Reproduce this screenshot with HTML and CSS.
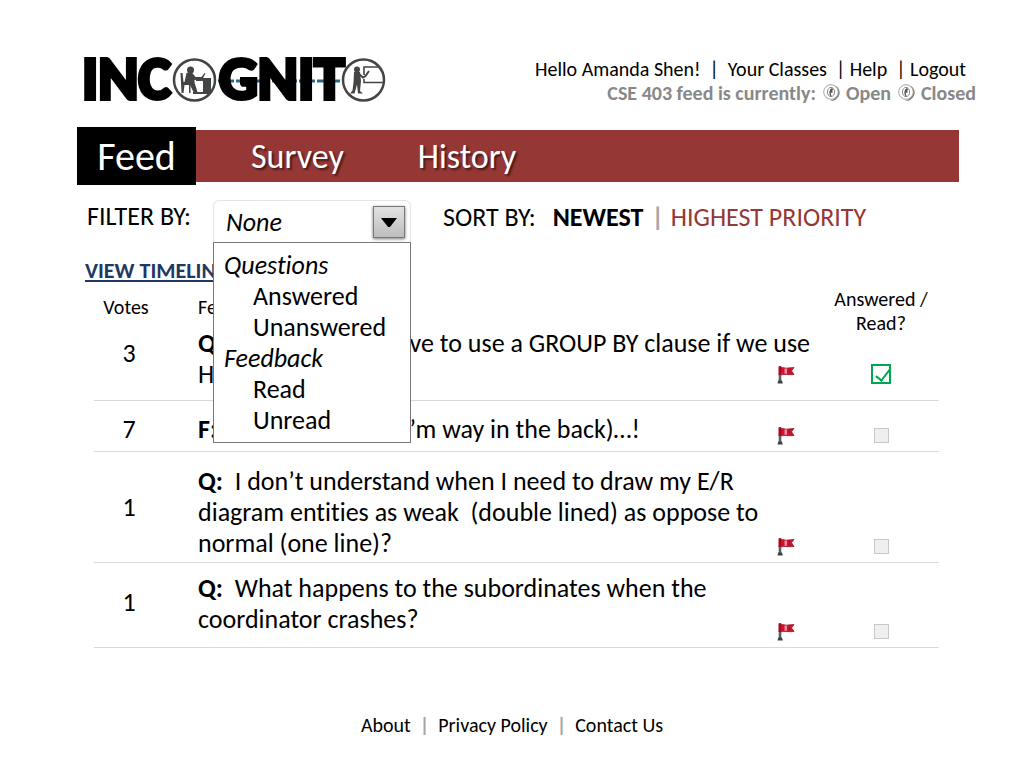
FILE: index.html
```html
<!DOCTYPE html>
<html lang="en">
<head>
<meta charset="utf-8">
<title>Incognito – Feed</title>
<link rel="stylesheet" href="styles.css">
</head>
<body>
<svg class="sprite" aria-hidden="true">
  <symbol id="flag" viewBox="0 0 18 19">
    <path d="M3 3c3-1.200 5 .8 8 0l6-.5-2.500 3.300 2.500 3.700c-5 .8-9-.8-14 .5z" fill="#d80f2c" stroke="#8c2028" stroke-width=".8"/>
    <path d="M7.500 3.500h2.500v5.300H7.500z" fill="#f48a9a"/>
    <path d="M11.500 3.300h2v5.500h-2z" fill="#a81c2c"/>
    <path d="M3 9V17" stroke="#5a5f5f" stroke-width="2.600"/>
    <path d="M.5 18.500 1.300 15.500H5l.8 3z" fill="#3d4343"/>
    <path d="M1.500 1.500 4.200.8V10H1.500z" fill="#a30b1c"/>
  </symbol>
  <symbol id="dial" viewBox="0 0 18 18">
    <path d="M12 1.500c6 3 6.500 10.500 0 14.500-2 1-4 1-5 .5C14.500 15 17 7 12 1.500z" fill="#777"/>
    <circle cx="8" cy="8" r="7.300" fill="#fff" stroke="#999" stroke-width=".9"/>
    <ellipse cx="8" cy="8" rx="3.600" ry="4.600" fill="none" stroke="#888" stroke-width="1"/>
    <path d="M9.500 4.500C6.500 5.500 6.500 10 8 12M9.500 5 8 8h1.500" fill="none" stroke="#555" stroke-width="1.400"/>
  </symbol>
</svg>
<div class="page">
  <header class="header">
    <a href="#" class="logo" aria-label="Incognito">
      <svg width="306" height="50" viewBox="0 0 306 50">
        <path d="M136 29h122" stroke="#2b6684" stroke-width="3" stroke-dasharray="7 2"/>
        <g class="logo-text">
          <text x="0" y="47">INC</text>
          <text x="137" y="47">GNIT</text>
        </g>
        <g fill="#fff" stroke="#444" stroke-width="2.500">
          <circle cx="112.500" cy="28" r="20.500"/>
          <circle cx="281.500" cy="28" r="20.500"/>
        </g>
        <g fill="#444">
          <circle cx="108.500" cy="18" r="3.500"/>
          <path d="M104.500 21l5-1 4 5 6 0 3-4 1 .5-3 5.500-8 1 0 2.500 3 9.500h-4l-4-8-5-2z"/>
          <path d="M114 26h15v16h-18v-2h10V29h-7z"/>
          <path d="M98.500 21h2l1 9h7v11h-1.500v-8h-4.500l-1 8h-2z"/>
        </g>
        <g fill="none" stroke="#444" stroke-width="1.600">
          <path d="M282 23v-8h15M282 27v3.500h19.500"/>
          <path d="M277 22l4 3.500 2.500-1.500 3.500-5" stroke-width="2"/>
        </g>
        <g fill="#444">
          <circle cx="275" cy="17.500" r="3"/>
          <path d="M272 20h6l1 9-1 10 3 2.500h-5l-1-9-2.500 9h-4.500l2.500-3 1-8z"/>
        </g>
      </svg>
    </a>
    <div class="account">
      <nav class="account-links" aria-label="Account">
        Hello Amanda Shen!&nbsp; |&nbsp; <a href="#">Your Classes</a>&nbsp; | <a href="#">Help</a>&nbsp; | <a href="#">Logout</a>
      </nav>
      <div class="status" role="radiogroup" aria-label="Feed status">
        <span>CSE 403 feed is currently:</span>
        <label class="dial"><input type="radio" name="status" checked><svg width="18" height="18"><use href="#dial"/></svg>Open</label>
        <label class="dial"><input type="radio" name="status"><svg width="18" height="18"><use href="#dial"/></svg>Closed</label>
      </div>
    </div>
  </header>

  <nav class="tabs" aria-label="Sections">
    <a href="#" class="tab tab-active" aria-current="page">Feed</a>
    <a href="#" class="tab">Survey</a>
    <a href="#" class="tab">History</a>
  </nav>

  <main class="content">
    <div class="toolbar">
      <label class="filter-label" for="filter">FILTER BY:</label>
      <div class="filter">
        <select id="filter" class="filter-select"><option>None</option></select>
        <span class="filter-arrow"><svg width="18" height="11" viewBox="0 0 18 11"><path d="M1 1h16L10 10H8z"/></svg></span>
        <ul class="menu">
          <li class="menu-group">Questions</li>
          <li><button type="button">Answered</button></li>
          <li><button type="button">Unanswered</button></li>
          <li class="menu-group">Feedback</li>
          <li><button type="button">Read</button></li>
          <li><button type="button">Unread</button></li>
        </ul>
      </div>
      <div class="sort">
        <span>SORT BY:</span>
        <a href="#" class="sort-current">NEWEST</a>
        <i>|</i>
        <a href="#" class="sort-other">HIGHEST PRIORITY</a>
      </div>
    </div>
    <a href="#" class="timeline">VIEW TIMELINE</a>

    <table class="feed">
      <thead>
        <tr><th class="votes">Votes</th><th class="entry">Feed</th><th class="flag"></th><th class="done"><div class="done-title">Answered / Read?</div></th></tr>
      </thead>
      <tbody>
        <tr class="first">
          <td class="votes">3</td>
          <td class="entry" colspan="2"><b>Q:</b>&nbsp; Do we always have to use a GROUP BY clause if we use HAVING?<svg class="flag-over" width="18" height="19" role="img" aria-label="Flag"><use href="#flag"/></svg></td>
          <td class="done"><input type="checkbox" class="check" checked aria-label="Answered"></td>
        </tr>
        <tr class="short">
          <td class="votes">7</td>
          <td class="entry"><b>F:</b>&nbsp; Can’t hear you. (I’m way in the back)…!</td>
          <td class="flag"><svg width="18" height="19" role="img" aria-label="Flag"><use href="#flag"/></svg></td>
          <td class="done"><input type="checkbox" class="check" aria-label="Read"></td>
        </tr>
        <tr class="tall">
          <td class="votes">1</td>
          <td class="entry"><b>Q:</b>&nbsp; I don’t understand when I need to draw my E/R diagram entities as weak&nbsp; (double lined) as oppose to normal (one line)?</td>
          <td class="flag"><svg width="18" height="19" role="img" aria-label="Flag"><use href="#flag"/></svg></td>
          <td class="done"><input type="checkbox" class="check" aria-label="Answered"></td>
        </tr>
        <tr class="last">
          <td class="votes">1</td>
          <td class="entry"><b>Q:</b>&nbsp; What happens to the subordinates when the coordinator crashes?</td>
          <td class="flag"><svg width="18" height="19" role="img" aria-label="Flag"><use href="#flag"/></svg></td>
          <td class="done"><input type="checkbox" class="check" aria-label="Answered"></td>
        </tr>
      </tbody>
    </table>
  </main>

  <footer class="footer">
    <a href="#">About</a><i>|</i><a href="#">Privacy Policy</a><i>|</i><a href="#">Contact Us</a>
  </footer>
</div>
</body>
</html>
```

FILE: styles.css
```css
* { box-sizing: border-box; }
body {
  margin: 0;
  background: #fff;
  color: #000;
  font: 26px/31px Carlito, Calibri, Lato, sans-serif;
  font-variant-ligatures: none;
}
a { color: inherit; text-decoration: none; }
i { font-style: normal; }
.sprite { position: absolute; width: 0; height: 0; }

.header {
  display: flex;
  justify-content: space-between;
  align-items: flex-start;
  padding: 52px 48px 0 82px;
}
.logo { display: block; height: 50px; }
.logo svg { display: block; overflow: visible; }
.logo-text {
  font: bold 61px Carlito, Calibri, Lato, sans-serif;
  stroke: #000;
  stroke-width: 4px;
}
.account { font-size: 20px; line-height: 24px; padding-top: 5px; }
.account-links { padding-right: 10px; text-align: right; }
.status {
  display: flex;
  justify-content: flex-end;
  gap: 7px;
  color: #888;
  font-weight: bold;
}
.dial { display: flex; align-items: center; gap: 5px; position: relative; }
.dial input { position: absolute; left: 0; margin: 0; width: 18px; height: 18px; opacity: 0; }

.tabs {
  display: flex;
  align-items: center;
  height: 52px;
  margin: 25px 65px 0 77px;
  background: #953735;
  color: #fff;
}
.tab { font-size: 34px; margin-right: 74px; text-shadow: 2px 2px 2px #0008; }
.tab-active {
  display: flex;
  align-items: center;
  justify-content: center;
  width: 119px;
  height: 58px;
  margin-right: 55px;
  background: #000;
  font-size: 40px;
  text-shadow: none;
}

.content { padding: 18px 85px 0; }
.toolbar { display: flex; align-items: flex-start; }
.filter-label { width: 128px; padding: 1px 0 0 2px; }
.filter { position: relative; width: 198px; }
.filter-select {
  display: block;
  appearance: none;
  width: 100%;
  height: 43px;
  padding: 2px 12px 0;
  border: 1px solid #e4e4e4;
  border-radius: 6px 6px 0 0;
  background: #fff;
  color: #000;
  font: inherit;
  font-style: italic;
}
.filter-arrow {
  position: absolute;
  top: 6px;
  right: 6px;
  display: grid;
  place-items: center;
  width: 32px;
  height: 32px;
  border: 1px solid #777;
  background: linear-gradient(#e2e2e2, #bdbdbd);
  box-shadow: 0 1px 3px #0008;
  pointer-events: none;
}
.menu {
  position: absolute;
  z-index: 1;
  top: 42px;
  left: 0;
  width: 100%;
  margin: 0;
  padding: 7px 0 6px 10px;
  border: 1px solid #777;
  background: #fff;
  list-style: none;
}
.menu-group { font-style: italic; }
.menu button {
  display: block;
  padding: 0 0 0 29px;
  border: 0;
  background: none;
  color: inherit;
  font: inherit;
}
.sort { display: flex; gap: 7px; padding: 2px 0 0 32px; }
.sort-current { font-weight: bold; padding: 0 1px 0 10px; }
.sort-other { color: #953735; }
.sort i, .footer i { color: #a6a6a6; font-weight: bold; }
.timeline {
  display: inline-block;
  margin-top: 14px;
  color: #1f3864;
  font-size: 22px;
  font-weight: bold;
  line-height: 28px;
  text-decoration: underline;
}

.feed { width: calc(100% - 9px); margin-left: 9px; border-collapse: collapse; table-layout: fixed; }
.feed th { padding: 0; font-size: 20px; font-weight: normal; line-height: 24px; vertical-align: top; }
.feed th.votes, .feed th.entry { padding-top: 10px; }
.feed td { padding: 0; border-bottom: 1px solid #d9d9d9; }
.feed .votes { width: 70px; text-align: center; }
.feed th.votes { padding-right: 6px; }
.feed .entry { padding-left: 34px; text-align: left; }
.feed .flag { width: 46px; text-align: left; }
.feed td.flag, .feed td.done { vertical-align: bottom; padding-bottom: 6px; }
.feed .flag svg { display: block; }
.feed .done { width: 116px; text-align: center; }
.feed td.done { padding-bottom: 8px; }
.done-title { margin: 2px 8px -7px; }
.check {
  display: block;
  appearance: none;
  width: 15px;
  height: 15px;
  margin: 0 auto;
  border: 1px solid #c8c8c8;
  background: #efefef;
}
.check:checked {
  width: 20px;
  height: 20px;
  border: 2px solid #00a650;
  background: #fff;
}
.check:checked::after {
  content: "";
  display: block;
  width: 6px;
  height: 13px;
  margin: 0 0 0 6px;
  border: solid #00a650;
  border-width: 0 2px 2px 0;
  transform: rotate(38deg);
}
.first .entry { position: relative; padding-bottom: 10px; }
.first td.done { padding-bottom: 16px; }
.feed .first .votes { padding-bottom: 22px; }
.flag-over { position: absolute; right: 28px; bottom: 16px; }
.short .entry { padding-top: 13px; padding-bottom: 6px; }
.short .votes { padding-top: 7px; }
.tall .entry { padding-top: 14px; padding-bottom: 3px; }
.last .entry { padding-top: 10px; padding-bottom: 12px; }
.feed .last .votes { padding-bottom: 6px; }

.footer {
  display: flex;
  justify-content: center;
  gap: 9px;
  padding: 65px 0 24px;
  font-size: 20px;
  line-height: 24px;
}
```
